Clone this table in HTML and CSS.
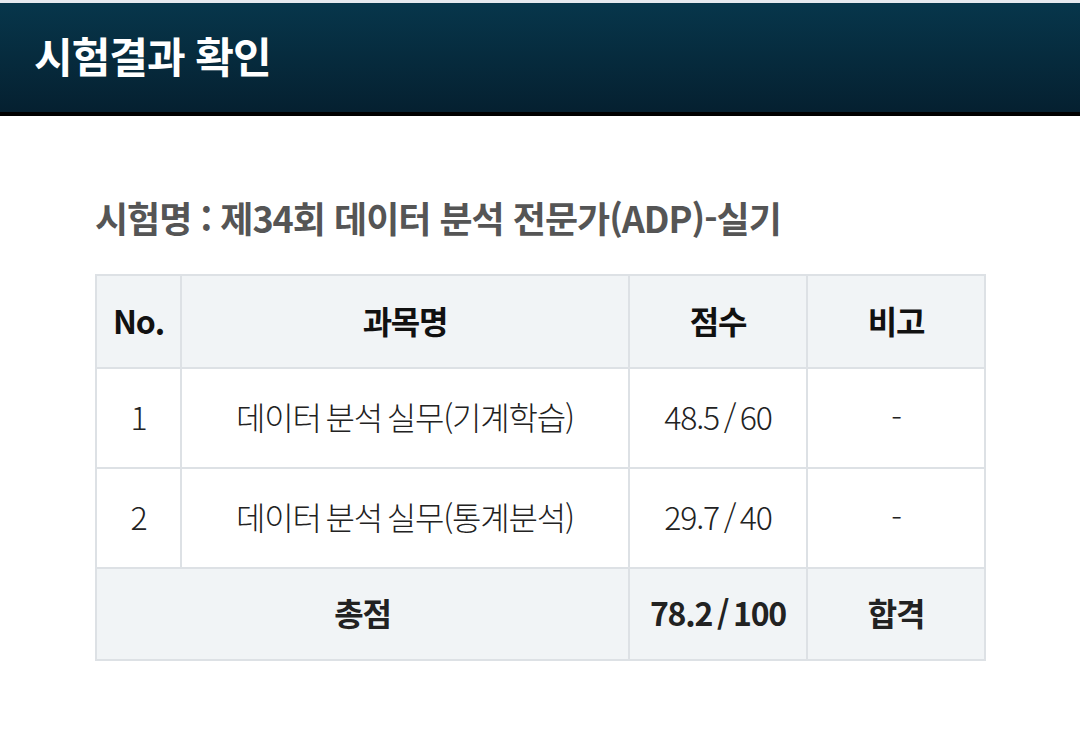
FILE: index.html
```html
<!DOCTYPE html>
<html lang="ko">
<head>
<meta charset="utf-8">
<link rel="stylesheet" href="styles.css">
</head>
<body>
<header class="topbar">
  <h1 class="topbar-title">시험결과 확인</h1>
</header>
<main class="content">
  <h2 class="exam-name">시험명 : 제34회 데이터 분석 전문가(ADP)-실기</h2>
  <table class="result">
    <colgroup>
      <col class="c-no"><col class="c-subj"><col class="c-score"><col class="c-note">
    </colgroup>
    <thead>
      <tr><th>No.</th><th>과목명</th><th>점수</th><th>비고</th></tr>
    </thead>
    <tbody>
      <tr class="row"><td>1</td><td>데이터 분석 실무(기계학습)</td><td>48.5 / 60</td><td>-</td></tr>
      <tr class="row"><td>2</td><td>데이터 분석 실무(통계분석)</td><td>29.7 / 40</td><td>-</td></tr>
      <tr class="total"><th colspan="2">총점</th><th>78.2 / 100</th><th>합격</th></tr>
    </tbody>
  </table>
</main>
</body>
</html>
```
FILE: styles.css
```css
html, body {
  margin: 0;
  padding: 0;
  background: #ffffff;
  font-family: "Noto Sans CJK KR", "Noto Sans", sans-serif;
}
.topbar {
  border-top: 3px solid #e6e9ef;
  border-bottom: 4px solid #000000;
  height: 109px;
  background: linear-gradient(#07364b, #052030);
  display: flex;
  align-items: center;
  padding-left: 34px;
}
.topbar-title {
  margin: 0;
  color: #ffffff;
  font-size: 42px;
  font-weight: 700;
  letter-spacing: -1px;
  line-height: 1;
  padding-bottom: 6px;
}
.content {
  padding: 0 96px 0 95px;
}
.exam-name {
  margin: 79px 0 35px;
  color: #555555;
  font-size: 36px;
  font-weight: 700;
  letter-spacing: -1px;
  line-height: 44px;
}
.result {
  width: 889px;
  border-collapse: collapse;
  border: 2px solid #dde1e5;
  table-layout: fixed;
}
.c-no { width: 85px; }
.c-subj { width: 448px; }
.c-score { width: 178px; }
.c-note { width: 178px; }
.result th, .result td {
  border: 2px solid #dde1e5;
  text-align: center;
  font-size: 32px;
  letter-spacing: -1.2px;
  word-spacing: -3px;
  color: #222222;
  padding: 0 0 4px;
}
.result thead th {
  height: 87px;
  background: #f1f4f6;
  font-weight: 700;
  color: #111111;
}
.row td {
  height: 94px;
  font-weight: 300;
}
.total th {
  height: 86px;
  background: #f1f4f6;
  font-weight: 700;
}
```
